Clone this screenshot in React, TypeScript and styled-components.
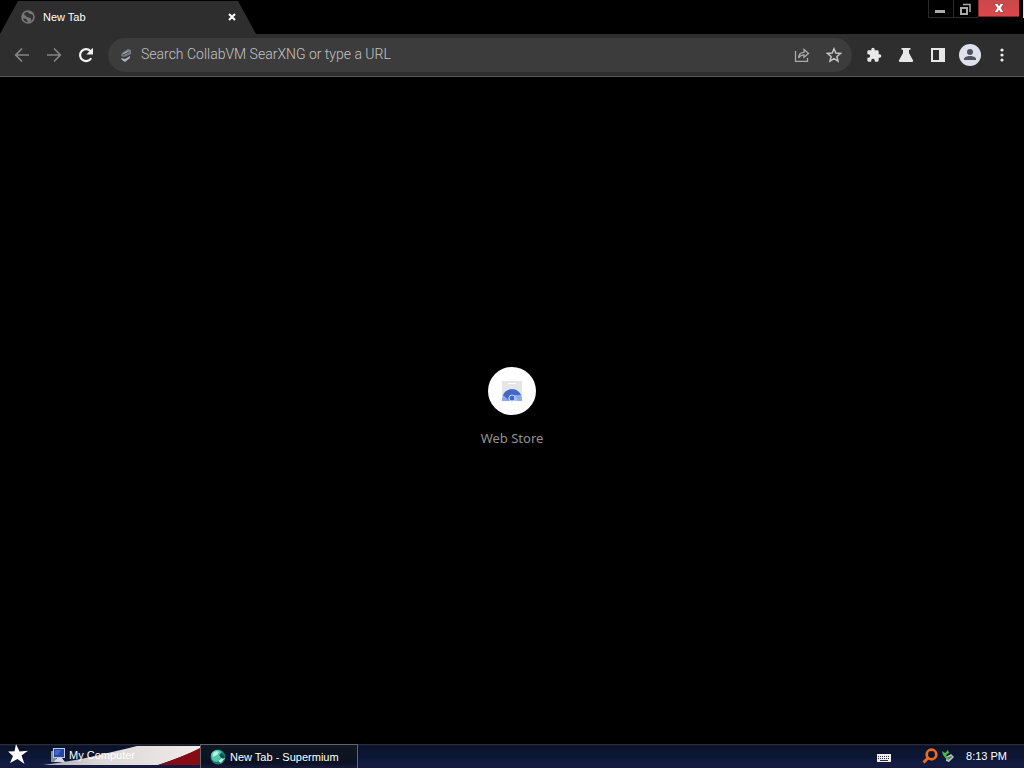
import React from "react";
import styled, { createGlobalStyle, css } from "styled-components";

const GlobalStyle = createGlobalStyle`
  *, *::before, *::after { box-sizing: border-box; }
  html, body { margin: 0; background: #000; }
  body, button, input { font-family: "Liberation Sans", Arial, sans-serif; }
  button { border: 0; padding: 0; background: none; color: inherit; }
  svg { display: block; flex: none; }
`;

const Desktop = styled.div`
  display: flex;
  flex-direction: column;
  min-height: 100vh;
  background: #000;
`;

const TabStrip = styled.header`
  display: flex;
  justify-content: space-between;
  align-items: flex-start;
  height: 34px;
`;

const Tab = styled.div`
  display: flex;
  align-items: center;
  gap: 8px;
  width: 256px;
  height: 34px;
  padding: 0 17px 0 21px;
  color: #fff;
  font-size: 11px;
  line-height: 16px;
  background: #2e2e2e;
  clip-path: polygon(18px 1px, 238px 1px, 256px 100%, 0 100%);
`;

const TabTitle = styled.span`
  flex: 1;
`;

const TabClose = styled.button`
  display: grid;
  place-items: center;
  width: 14px;
  height: 14px;
`;

const WindowControls = styled.div`
  display: flex;
  height: 18px;
  padding-right: 4px;
  border-right: 1px solid #ddd;
`;

const WindowButton = styled.button<{ $close?: boolean }>`
  display: grid;
  place-items: center;
  width: 25px;
  height: 18px;
  border: 1px solid #2a2a2a;
  border-width: 0 0 1px 1px;
  ${(p) =>
    p.$close &&
    css`
      width: 41px;
      height: 17px;
      border-color: #8f2424;
      background: linear-gradient(#c9484b, #dc484b);
    `}
`;

const Toolbar = styled.nav`
  display: flex;
  align-items: center;
  height: 43px;
  padding: 0 6px;
  background: #2e2e2e;
  border-bottom: 1px solid #555;
`;

const ToolButton = styled.button`
  display: grid;
  place-items: center;
  flex: none;
  width: 32px;
  height: 32px;
`;

const AddressBar = styled.form`
  display: flex;
  flex: 1;
  align-items: center;
  height: 34px;
  margin: 0 6px;
  padding: 0 2px 0 11px;
  border-radius: 17px;
  background: #3c3c3c;
`;

const AddressInput = styled.input`
  flex: 1;
  min-width: 0;
  height: 24px;
  margin-left: 8px;
  padding: 0 0 2px;
  border: 0;
  outline: 0;
  background: none;
  color: #eee;
  font-family: Roboto, sans-serif;
  font-size: 14px;
  font-weight: 300;
  &::placeholder { color: #c4c4c4; opacity: 1; }
`;

const Page = styled.main`
  display: flex;
  flex: 1;
  justify-content: center;
  align-items: center;
  padding-bottom: 8px;
`;

const Shortcut = styled.a`
  display: flex;
  flex-direction: column;
  align-items: center;
  gap: 15px;
  color: #929292;
  font-family: "Noto Sans", sans-serif;
  font-size: 13px;
  line-height: 16px;
  text-decoration: none;
`;

const ShortcutIcon = styled.span`
  display: grid;
  place-items: center;
  width: 48px;
  height: 48px;
  border-radius: 50%;
  background: #fff;
`;

const Taskbar = styled.footer`
  display: flex;
  align-items: stretch;
  height: 24px;
  color: #fff;
  font-size: 11px;
  line-height: 16px;
  background: linear-gradient(#30343f 0, #0b1228 2px, #0d1736 14px, #131d44 20px, #15173a 24px);
`;

const StartButton = styled.button`
  display: grid;
  place-items: center;
  width: 36px;
  padding-bottom: 4px;
`;

const TaskButton = styled.button<{ $banner?: boolean }>`
  display: flex;
  align-items: center;
  gap: 4px;
  width: 158px;
  padding-left: 9px;
  font-size: 11px;
  line-height: 16px;
  text-align: left;
  ${(p) =>
    p.$banner
      ? css`
          width: 164px;
          padding: 0 0 2px 14px;
          gap: 3px;
        `
      : css`
          border: 1px solid #61656f;
          border-width: 1px 1px 0 1px;
          background: linear-gradient(#111722, #0a1222 18px, #17193c);
        `}
`;

const BannerCell = styled.div`
  display: grid;
  width: 164px;
  height: 24px;
  & > * { grid-area: 1 / 1; }
`;

const Tray = styled.div`
  display: flex;
  align-items: center;
  margin-left: auto;
  padding-right: 17px;
`;

const TrayIcons = styled.div`
  display: flex;
  align-items: center;
  gap: 3px;
  margin: 0 11px 0 31px;
`;

const GlobeIcon = () => (
  <svg width="14" height="14" viewBox="0 0 14 14">
    <circle cx="7" cy="7" r="6" fill="#333" stroke="#777" strokeWidth="1.6" />
    <path d="M1 4c3 0 3 2 5 3s3 0 4 2-1 3-2 4c-2 0-1-3-3-4S2 9 1 8zM7 1c0 2 1 3 3 3s2 1 3 1c-1-2-3-4-6-4z" fill="#777" />
  </svg>
);

const Arrow = ({ back }: { back?: boolean }) => (
  <svg width="16" height="16" viewBox="0 0 16 16" fill="none" stroke="#858585" strokeWidth="1.7">
    {back ? <path d="M15 8H2M8 1.5 1.7 8 8 14.500" /> : <path d="M1 8h13M8 1.500 14.300 8 8 14.500" />}
  </svg>
);

const ReloadIcon = () => (
  <svg width="16" height="16" viewBox="0 0 16 16">
    <path d="M13.200 11.200A6 6 0 1 1 12.300 3.800L14 5.500" fill="none" stroke="#f3f3f3" strokeWidth="2.200" />
    <path d="M15 .8v6.700H8.300z" fill="#f3f3f3" />
  </svg>
);

const SearchEngineIcon = () => (
  <svg width="14" height="16" viewBox="0 0 14 16">
    <path d="M3 6 9 2l3 1v4L5 10 2 9z" fill="#777a87" />
    <path d="m4 6 5-2 1 1-4 3M2 11l4 1 5-3v2l-5 4-3-2z" fill="#aeb0ba" />
    <path d="m4 8 6-3" stroke="#3c3c46" />
  </svg>
);

const ShareIcon = () => (
  <svg width="16" height="16" viewBox="0 0 16 16" fill="none" stroke="#aaa" strokeWidth="1.300">
    <path d="M1.500 4v10.300h12V11" />
    <path d="M4.500 11c.3-4 2.500-5.700 5.500-5.700V2.500L14.500 6.500 10 10.300V7.800C7.500 7.800 5.800 8.700 4.500 11z" />
  </svg>
);

const StarIcon = () => (
  <svg width="16" height="16" viewBox="0 0 16 16">
    <path d="m8 1.800 1.800 4.300 4.700.4-3.600 3 1.100 4.700L8 11.700l-4 2.500 1.100-4.700-3.600-3 4.700-.4z" fill="none" stroke="#c4c4c4" strokeWidth="1.500" />
  </svg>
);

const PuzzleIcon = () => (
  <svg width="16" height="16" viewBox="0 0 24 24" fill="#e8e8e8">
    <path d="M20.500 11H19V7a2 2 0 0 0-2-2h-4V3.500a2.500 2.500 0 0 0-5 0V5H4a2 2 0 0 0-2 2v3.800h1.500a2.700 2.700 0 0 1 0 5.400H2V20a2 2 0 0 0 2 2h3.800v-1.500a2.700 2.700 0 0 1 5.400 0V22H17a2 2 0 0 0 2-2v-4h1.500a2.500 2.500 0 0 0 0-5z" />
  </svg>
);

const FlaskIcon = () => (
  <svg width="16" height="16" viewBox="0 0 16 16" fill="#e8e8e8">
    <path d="M3.500 1h9v1.700H11V6l4 7.300c.5 1-.1 1.700-1 1.700H2c-.9 0-1.500-.7-1-1.700L5 6V2.700H3.500z" />
  </svg>
);

const SidePanelIcon = () => (
  <svg width="16" height="16" viewBox="0 0 16 16">
    <path fillRule="evenodd" d="M1 1h14v14H1zM3 3v10h6V3z" fill="#e8e8e8" />
  </svg>
);

const ProfileIcon = () => (
  <svg width="22" height="22" viewBox="0 0 22 22">
    <circle cx="11" cy="11" r="11" fill="#dfe2ea" />
    <circle cx="11" cy="8" r="3" fill="#4d5361" />
    <path d="M5 16v-1c0-2 3-3 6-3s6 1 6 3v1z" fill="#4d5361" />
  </svg>
);

const MenuIcon = () => (
  <svg width="4" height="16" viewBox="0 0 4 16" fill="#eee">
    <circle cx="2" cy="3" r="1.600" /><circle cx="2" cy="8" r="1.600" /><circle cx="2" cy="13" r="1.600" />
  </svg>
);

const WebStoreIcon = () => (
  <svg width="24" height="24" viewBox="0 0 24 24">
    <path d="M2 2h20v20H2z" fill="#e5e6e8" />
    <path d="M8 4h8v1H8z" fill="#fff" />
    <path d="M2 22v-2a10 10 0 0 1 20 0v2z" fill="#8ba9ef" />
    <path d="M3 16a10 10 0 0 1 18 0h-9a4 4 0 0 0-3.500 5z" fill="#4568c4" />
    <circle cx="12" cy="19" r="3" fill="#3d68d2" stroke="#c7d6fa" />
    <path d="m15 16 3 6h-4z" fill="#adc2f5" />
  </svg>
);

const FlagStarIcon = () => (
  <svg width="22" height="20" viewBox="0 0 22 20">
    <path d="m9 0 3.500 7.500 8.500-.8-6.500 4.800L17.500 20l-7-5L3 19l3-7-5-4.500 6.500-.3z" fill="#fff" />
  </svg>
);

const FlagStripes = () => (
  <svg width="164" height="24" viewBox="0 0 164 24">
    <defs>
      <linearGradient id="stripe" x1="0" x2="1">
        <stop offset="0" stopColor="#aaa9ad" />
        <stop offset=".35" stopColor="#d9d7d6" />
        <stop offset="1" stopColor="#f1ebe9" />
      </linearGradient>
    </defs>
    <path d="M7 21C40 17 69 10 101 2h63v3c-12 5-26 11-42 16z" fill="url(#stripe)" />
    <path d="M122 21c16-5 30-11 42-17v17z" fill="#850c12" />
  </svg>
);

const ComputerIcon = () => (
  <svg width="16" height="16" viewBox="0 0 16 16">
    <path d="M1 4h5v11H1z" fill="#858ea3" />
    <path d="M3 1h12v10H3z" fill="#c2c9dd" />
    <path d="M4 2h10v8H4z" fill="#2146aa" />
    <path d="M5 3h6L8 8H5z" fill="#4468c4" />
    <path d="M7 11h5l3 4H4z" fill="#d5d8e1" />
  </svg>
);

const SupermiumIcon = () => (
  <svg width="16" height="16" viewBox="0 0 16 16">
    <circle cx="8" cy="8" r="7.500" fill="#197a72" />
    <path d="M1 5c3-5 8-5 11-2l-3 3 2 3-4 4c-4 0-6-3-6-8z" fill="#54c8ad" />
    <path d="M3 4c2-2 5-2 6-1L7 6l-4 2zM8 12l5-4 2 1-4 5z" fill="#b6eee0" />
    <path d="M11 4l4 4-2 2-3-3z" fill="#0c4d52" />
  </svg>
);

const KeyboardIcon = () => (
  <svg width="14" height="12" viewBox="0 0 14 12">
    <path d="M0 4h14v8H0z" fill="#eee" />
    <path d="M1 6.500h12M1 8.500h12" stroke="#30323e" strokeDasharray="1 1" />
    <path d="M3 10.500h8" stroke="#30323e" />
  </svg>
);

const MagnifierIcon = () => (
  <svg width="16" height="16" viewBox="0 0 16 16" fill="none" stroke="#ee6b19">
    <circle cx="9.500" cy="6.500" r="4.800" strokeWidth="2.700" />
    <path d="m6 10-4.500 4.500" strokeWidth="3" />
  </svg>
);

const RemovableIcon = () => (
  <svg width="14" height="14" viewBox="0 0 14 14">
    <path d="m5 8 5-3 3 3-5 5-3-1z" fill="#b7c0c2" />
    <path d="m6 9 4-2 1 1-4 3z" fill="#5a6671" />
    <path d="M1 2 4 4l3-3 1 3-3 2 3 4-2 1-4-5z" fill="#4cba4b" />
  </svg>
);

export default function App() {
  return (
    <Desktop>
      <GlobalStyle />
      <TabStrip>
        <Tab>
          <GlobeIcon />
          <TabTitle>New Tab</TabTitle>
          <TabClose aria-label="Close tab">
            <svg width="8" height="8" viewBox="0 0 8 8" stroke="#fff" strokeWidth="2">
              <path d="m1 1 6 6M7 1 1 7" />
            </svg>
          </TabClose>
        </Tab>
        <WindowControls>
          <WindowButton aria-label="Minimize">
            <svg width="12" height="12" viewBox="0 0 12 12"><path d="M0 7h10v3H0z" fill="#aaa" /></svg>
          </WindowButton>
          <WindowButton aria-label="Restore">
            <svg width="12" height="12" viewBox="0 0 12 12" fill="none" stroke="#aaa">
              <path d="M1 5h6v6H1z" strokeWidth="2" />
              <path d="M3 1.500h7V9" strokeWidth="1.500" />
            </svg>
          </WindowButton>
          <WindowButton $close aria-label="Close">
            <svg width="12" height="10" viewBox="0 0 12 10">
              <path d="M1 .5h3.500L6 2.800 7.500.5H11L8 5l3 4.500H7.500L6 7.200 4.500 9.500H1L4 5z" fill="#fff" stroke="#7a2a2a" strokeWidth=".6" />
            </svg>
          </WindowButton>
        </WindowControls>
      </TabStrip>
      <Toolbar>
        <ToolButton aria-label="Back"><Arrow back /></ToolButton>
        <ToolButton aria-label="Forward"><Arrow /></ToolButton>
        <ToolButton aria-label="Reload"><ReloadIcon /></ToolButton>
        <AddressBar>
          <SearchEngineIcon />
          <AddressInput aria-label="Address and search bar" placeholder="Search CollabVM SearXNG or type a URL" />
          <ToolButton type="button" aria-label="Share"><ShareIcon /></ToolButton>
          <ToolButton type="button" aria-label="Bookmark this tab"><StarIcon /></ToolButton>
        </AddressBar>
        <ToolButton aria-label="Extensions"><PuzzleIcon /></ToolButton>
        <ToolButton aria-label="Experiments"><FlaskIcon /></ToolButton>
        <ToolButton aria-label="Side panel"><SidePanelIcon /></ToolButton>
        <ToolButton aria-label="Profile"><ProfileIcon /></ToolButton>
        <ToolButton aria-label="Menu"><MenuIcon /></ToolButton>
      </Toolbar>
      <Page>
        <Shortcut href="#web-store">
          <ShortcutIcon><WebStoreIcon /></ShortcutIcon>
          Web Store
        </Shortcut>
      </Page>
      <Taskbar>
        <StartButton aria-label="Start"><FlagStarIcon /></StartButton>
        <BannerCell>
          <FlagStripes />
          <TaskButton $banner><ComputerIcon />My Computer</TaskButton>
        </BannerCell>
        <TaskButton><SupermiumIcon />New Tab - Supermium</TaskButton>
        <Tray>
          <KeyboardIcon />
          <TrayIcons><MagnifierIcon /><RemovableIcon /></TrayIcons>
          <time>8:13 PM</time>
        </Tray>
      </Taskbar>
    </Desktop>
  );
}
